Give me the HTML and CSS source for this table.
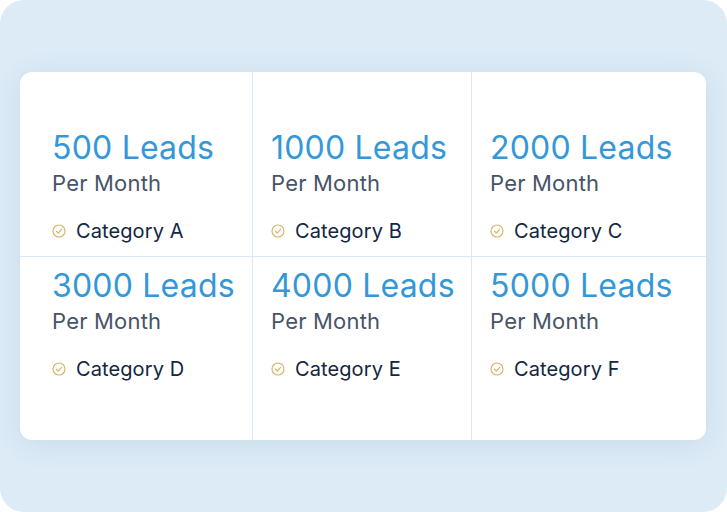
FILE: index.html
```html
<!DOCTYPE html>
<html>
<head>
<meta charset="utf-8">
<link rel="stylesheet" href="styles.css">
</head>
<body>
<div class="frame">
  <div class="card">
    <div class="col col-first">
      <div class="cell cell-top">
        <div class="leads">500 Leads</div>
        <div class="per">Per Month</div>
        <div class="cat"><svg class="chk" viewBox="0 0 14 14"><circle cx="7" cy="7" r="6" fill="none" stroke="#d8b66c" stroke-width="1.2"/><path d="M4.4 7.2 L6.3 9 L9.6 5.3" fill="none" stroke="#d8b66c" stroke-width="1.2" stroke-linecap="round" stroke-linejoin="round"/></svg>Category A</div>
      </div>
      <div class="cell">
        <div class="leads">3000 Leads</div>
        <div class="per">Per Month</div>
        <div class="cat"><svg class="chk" viewBox="0 0 14 14"><circle cx="7" cy="7" r="6" fill="none" stroke="#d8b66c" stroke-width="1.2"/><path d="M4.4 7.2 L6.3 9 L9.6 5.3" fill="none" stroke="#d8b66c" stroke-width="1.2" stroke-linecap="round" stroke-linejoin="round"/></svg>Category D</div>
      </div>
    </div>
    <div class="col col-mid">
      <div class="cell cell-top">
        <div class="leads">1000 Leads</div>
        <div class="per">Per Month</div>
        <div class="cat"><svg class="chk" viewBox="0 0 14 14"><circle cx="7" cy="7" r="6" fill="none" stroke="#d8b66c" stroke-width="1.2"/><path d="M4.4 7.2 L6.3 9 L9.6 5.3" fill="none" stroke="#d8b66c" stroke-width="1.2" stroke-linecap="round" stroke-linejoin="round"/></svg>Category B</div>
      </div>
      <div class="cell">
        <div class="leads">4000 Leads</div>
        <div class="per">Per Month</div>
        <div class="cat"><svg class="chk" viewBox="0 0 14 14"><circle cx="7" cy="7" r="6" fill="none" stroke="#d8b66c" stroke-width="1.2"/><path d="M4.4 7.2 L6.3 9 L9.6 5.3" fill="none" stroke="#d8b66c" stroke-width="1.2" stroke-linecap="round" stroke-linejoin="round"/></svg>Category E</div>
      </div>
    </div>
    <div class="col col-last">
      <div class="cell cell-top">
        <div class="leads">2000 Leads</div>
        <div class="per">Per Month</div>
        <div class="cat"><svg class="chk" viewBox="0 0 14 14"><circle cx="7" cy="7" r="6" fill="none" stroke="#d8b66c" stroke-width="1.2"/><path d="M4.4 7.2 L6.3 9 L9.6 5.3" fill="none" stroke="#d8b66c" stroke-width="1.2" stroke-linecap="round" stroke-linejoin="round"/></svg>Category C</div>
      </div>
      <div class="cell">
        <div class="leads">5000 Leads</div>
        <div class="per">Per Month</div>
        <div class="cat"><svg class="chk" viewBox="0 0 14 14"><circle cx="7" cy="7" r="6" fill="none" stroke="#d8b66c" stroke-width="1.2"/><path d="M4.4 7.2 L6.3 9 L9.6 5.3" fill="none" stroke="#d8b66c" stroke-width="1.2" stroke-linecap="round" stroke-linejoin="round"/></svg>Category F</div>
      </div>
    </div>
  </div>
</div>
</body>
</html>
```
FILE: styles.css
```css
html, body {
  margin: 0;
  padding: 0;
  background: #ffffff;
}
body {
  font-family: Inter, "Noto Sans", sans-serif;
}
.frame {
  width: 727px;
  height: 512px;
  box-sizing: border-box;
  background: #dcebf6;
  border-radius: 24px;
  padding: 72px 21px 72px 20px;
}
.card {
  display: grid;
  grid-template-columns: 233px 219px 1fr;
  height: 368px;
  background: #ffffff;
  border-radius: 12px;
  box-shadow: 0 4px 28px rgba(40, 90, 140, 0.10);
  overflow: hidden;
}
.col {
  display: flex;
  flex-direction: column;
  padding: 47px 0 44px;
  box-sizing: border-box;
}
.col-first, .col-mid {
  border-right: 1px solid #dce9f5;
}
.cell {
  padding: 10px 0 13px 18px;
}
.col-first .cell {
  padding-left: 32px;
}
.cell-top {
  border-bottom: 1px solid #dce9f5;
}
.leads {
  font-size: 32px;
  line-height: 38px;
  color: #3498d8;
  font-weight: 400;
  letter-spacing: 0.2px;
  white-space: nowrap;
}
.per {
  font-size: 22px;
  line-height: 26px;
  color: #475467;
  letter-spacing: 0.2px;
  margin-top: 3px;
}
.cat {
  display: flex;
  align-items: center;
  font-size: 20px;
  line-height: 24px;
  font-weight: 400;
  letter-spacing: 0.1px;
  color: #132642;
  margin-top: 23px;
}
.chk {
  width: 14px;
  height: 14px;
  margin-right: 10px;
  flex: none;
}
```
